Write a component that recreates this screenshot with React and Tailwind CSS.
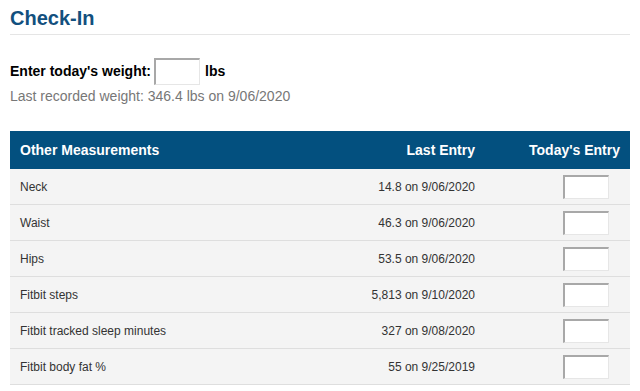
import React from "react";

const rows = [
  ["Neck", "14.8 on 9/06/2020"],
  ["Waist", "46.3 on 9/06/2020"],
  ["Hips", "53.5 on 9/06/2020"],
  ["Fitbit steps", "5,813 on 9/10/2020"],
  ["Fitbit tracked sleep minutes", "327 on 9/08/2020"],
  ["Fitbit body fat %", "55 on 9/25/2019"],
];

function Box({ h }) {
  return (
    <input
      type="text"
      className={`w-[46px] ${h} bg-white border-t-2 border-l-2 border-r border-b border-t-[#a8a8a8] border-l-[#a8a8a8] border-r-[#e6e6e6] border-b-[#e6e6e6] outline-none`}
    />
  );
}

export default function App() {
  return (
    <div className="w-[640px] h-[391px] bg-white px-[10px] font-['Liberation_Sans',Arial,sans-serif]">
      <div className="pt-[6px] pb-[4px] border-b border-[#e5e5e5]">
        <h1 className="text-[20px] leading-[24px] font-bold text-[#12507e]">Check-In</h1>
      </div>
      <div className="mt-[23px] flex items-center h-[27px] text-[14px] font-bold text-black">
        <span>Enter today's weight:</span>
        <span className="ml-[3px] flex">
          <input
            type="text"
            className="w-[46px] h-[27px] bg-white border-t-2 border-l-2 border-r border-b border-t-[#a8a8a8] border-l-[#a8a8a8] border-r-[#e6e6e6] border-b-[#e6e6e6] outline-none"
          />
        </span>
        <span className="ml-[5px]">lbs</span>
      </div>
      <div className="mt-[1px] text-[14px] leading-[20px] text-[#777]">
        Last recorded weight: 346.4 lbs on 9/06/2020
      </div>
      <div className="mt-[25px]">
        <div className="flex items-center h-[38px] bg-[#03507f] text-white font-bold text-[14px]">
          <div className="flex-1 pl-[10px]">Other Measurements</div>
          <div className="w-[200px] text-right pr-[10px]">Last Entry</div>
          <div className="w-[145px] text-right pr-[10px]">Today's Entry</div>
        </div>
        {rows.map(([name, last]) => (
          <div
            key={name}
            className="flex items-center h-[36px] bg-[#f4f4f4] border-b border-[#dedede] text-[12px] text-[#333]"
          >
            <div className="flex-1 pl-[10px]">{name}</div>
            <div className="w-[200px] text-right pr-[10px]">{last}</div>
            <div className="w-[145px] flex justify-end pr-[21px]">
              <Box h="h-[24px]" />
            </div>
          </div>
        ))}
      </div>
    </div>
  );
}
